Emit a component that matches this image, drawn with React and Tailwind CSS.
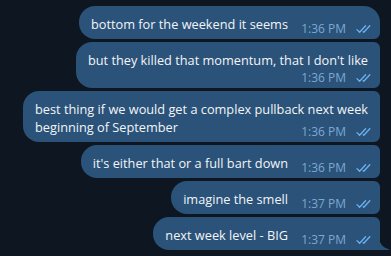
import React from "react";

const messages = [
  { text: "bottom for the weekend it seems", time: "1:36 PM", pos: "first" },
  { text: "but they killed that momentum, that I don't like", time: "1:36 PM", pos: "mid", timeBelow: true },
  { text: ["best thing if we would get a complex pullback next week", "beginning of September"], time: "1:36 PM", pos: "mid" },
  { text: "it's either that or a full bart down", time: "1:36 PM", pos: "mid" },
  { text: "imagine the smell", time: "1:37 PM", pos: "mid" },
  { text: "next week level - BIG", time: "1:37 PM", pos: "last" },
];

function Checks() {
  return (
    <svg width="17" height="8" viewBox="0 0 17 8" fill="none" stroke="#6cb2f0" strokeWidth="1.3" strokeLinecap="round" strokeLinejoin="round">
      <path d="M1 4.6 L3.6 7.2 L9.6 0.8" />
      <path d="M7.2 6.6 L7.8 7.2 L13.8 0.8" />
    </svg>
  );
}

function Bubble({ text, time, pos, timeBelow }) {
  const corners =
    pos === "first"
      ? "rounded-l-[16px] rounded-tr-[16px] rounded-br-[6px]"
      : pos === "last"
      ? "rounded-l-[16px] rounded-tr-[6px] rounded-br-none"
      : "rounded-l-[16px] rounded-r-[6px]";

  return (
    <div className={`relative bg-[#2b5278] ${corners} pl-3 pr-3 pt-[9px] pb-[6px] text-[12.75px] leading-[18px] text-[#f2f5f8]`}>
      <p className="whitespace-nowrap">
        {Array.isArray(text) ? (
          <>
            {text[0]}
            <br />
            {text[1]}
          </>
        ) : (
          text
        )}
        {!timeBelow && <span className="inline-block w-[80px]" />}
      </p>
      {timeBelow && <div className="h-[13px]" />}
      <div className="absolute bottom-[3px] right-[7px] flex items-end gap-[10px] text-[12px] leading-[14px] text-[#7da8d3]">
        <span>{time}</span>
        <span className="pb-[3px]">
          <Checks />
        </span>
      </div>
      {pos === "last" && (
        <svg className="absolute bottom-0 right-[-10px]" width="11" height="13" viewBox="0 0 11 13">
          <path d="M0 0 C0.5 6 3 10 9.5 12 Q11 12.6 9.5 13 L0 13 Z" fill="#2b5278" />
        </svg>
      )}
    </div>
  );
}

export default function App() {
  return (
    <div className="h-[256px] w-full bg-[#0e1621] font-['Open_Sans',sans-serif] overflow-hidden">
      <div className="flex flex-col items-end gap-[3px] pt-[6px] pr-[11px]">
        {messages.map((m, i) => (
          <Bubble key={i} {...m} />
        ))}
      </div>
    </div>
  );
}
